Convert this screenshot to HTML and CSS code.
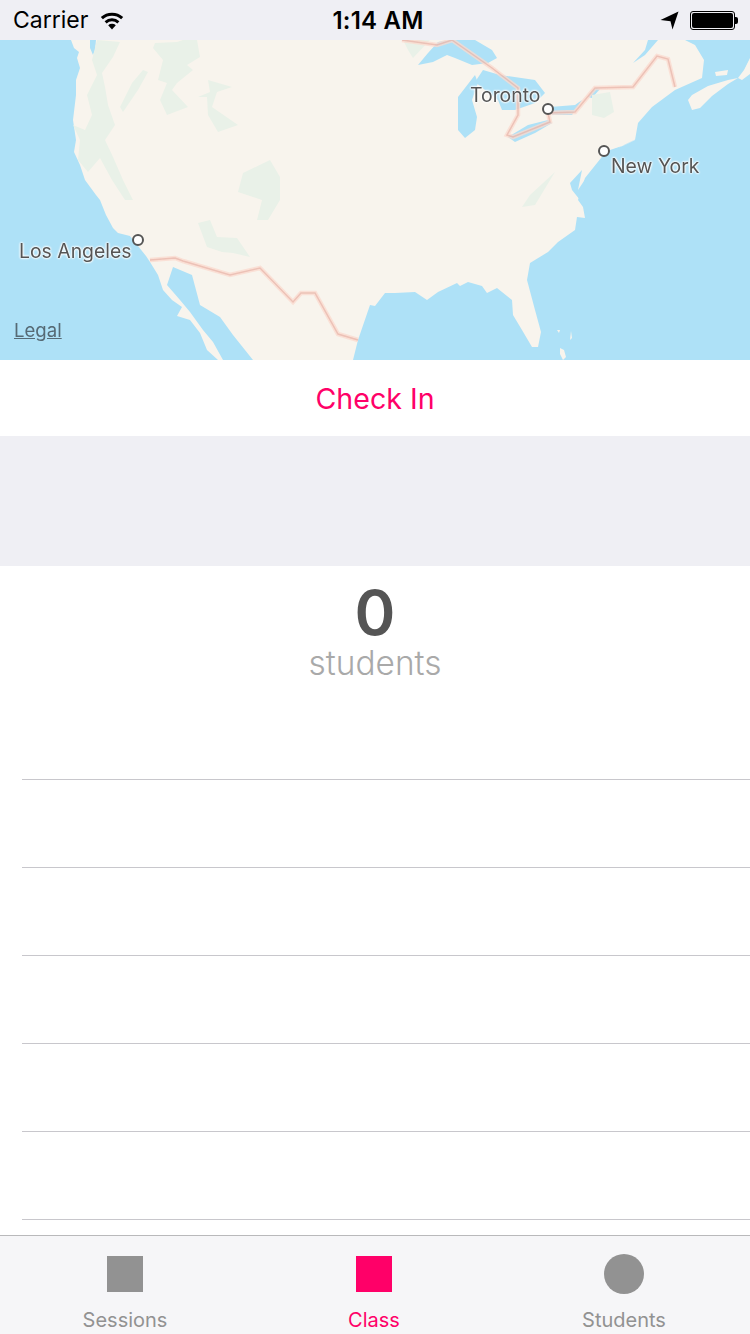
FILE: index.html
```html
<!DOCTYPE html>
<html>
<head>
  <meta charset="UTF-8">
  <title>Class</title>
  <link rel="stylesheet" href="styles.css">
</head>
<body>
<div class="app">

  <div class="status">
    <div class="status-left">
      <span class="carrier">Carrier</span>
      <svg class="wifi" width="26" height="19" viewBox="0 0 26 19">
        <path d="M13 18.5 9.2 14.2a5.6 5.6 0 0 1 7.6 0Z"/>
        <path d="M7.6 12.4 5.6 10.2a11 11 0 0 1 14.8 0l-2 2.2a8.2 8.2 0 0 0-10.8 0Z"/>
        <path d="M3.9 8.3 1.8 6a16.7 16.7 0 0 1 22.4 0l-2.1 2.3a13.6 13.6 0 0 0-18.2 0Z"/>
      </svg>
    </div>
    <span class="clock">1:14 AM</span>
    <div class="status-right">
      <svg class="arrow" width="19" height="19" viewBox="0 0 19 19"><path d="M0.5 9 18.5 0.5 12.5 18.5 10.5 10.2Z"/></svg>
      <div class="battery"><div class="battery-fill"></div></div>
      <div class="battery-tip"></div>
    </div>
  </div>

  <div class="map">
    <svg class="map-art" width="750" height="320" viewBox="0 40 750 320">
      <g class="base">
        <!-- mainland -->
        <path class="land" d="M71 40 74 48 79 52 77 58 80 68 76 80 76 95 73 120 76 140 74 152 80 165 85 180 96 195 100 200 106 215 113 228 118 233 130 236 138 246 146 256 150 262 158 275 163 290 172 300 182 307 177 316 190 320 200 333 207 350 218 360 223 360 213 342 203 330 190 312 180 300 167 285 173 267 192 275 200 305 220 317 233 335 253 360 353 360 358 340 370 305 375 306 385 293 395 293 415 292 427 300 438 292 457 283 460 286 468 282 482 286 487 293 497 288 512 300 513 315 522 330 532 347 538 347 541 332 535 310 527 280 530 263 548 252 558 242 575 230 577 217 585 218 583 207 578 200 585 178 605 153 625 145 635 140 638 123 652 107 675 90 702 78 704 60 695 45 685 40 Z"/>
        <!-- nova scotia, newfoundland -->
        <path class="land" d="M688 100 692 110 700 108 712 96 728 84 738 78 728 80 708 86 692 95Z"/>
        <path class="land" d="M738 78 744 70 750 58 750 74 742 80Z"/>
        <path class="land" d="M715 72 728 70 727 75 716 76Z"/>
        <!-- islands -->
        <path class="land" d="M560 348 564 350 566 357 563 360 560 354Z"/>
        <path class="land" d="M557 330 560 330 559 333Z"/>
        <path class="land" d="M571 331 572 338 570 340Z"/>
        <!-- water inland -->
        <path class="water" d="M633 63 645 50 648 40 658 40 645 55Z"/>
        <path class="water" d="M90 40 96 40 95 50 93 55 90 48Z"/>
        <path class="water" d="M450 40 475 40 492 50 497 58 488 63 472 65 455 58 447 55 433 62 418 65 428 53 438 42Z"/>
        <path class="water" d="M483 70 500 75 535 80 545 93 535 103 515 110 502 110 498 100 485 90 475 82Z"/>
        <path class="water" d="M475 75 458 97 458 130 465 138 475 130 477 117 472 100 478 83Z"/>
        <path class="water" d="M508 137 515 142 535 133 552 123 548 120 528 125Z"/>
        <path class="water" d="M550 107 575 105 582 100 572 115 552 115Z"/>
        <path class="water" d="M588 97 596 88 600 89 592 98Z"/>
        <path class="water" d="M610 150 625 145 640 137 620 147 607 156Z"/>
        <path class="water" d="M570 183 582 170 578 190 586 178 580 200 572 190Z"/>
      </g>
      <g class="forest">
        <path d="M97 40 120 42 113 57 102 73 105 87 108 105 115 125 105 140 113 157 123 180 133 200 125 200 112 180 100 158 88 172 78 160 80 140 73 125 85 130 92 115 87 95 97 75 92 60Z"/>
        <path d="M143 70 148 72 138 90 123 112 120 107 132 83Z"/>
        <path d="M155 43 177 42 183 40 197 40 200 57 187 65 193 70 177 83 172 90 188 107 167 115 160 100 167 83 158 80 163 60 153 48Z"/>
        <path d="M208 80 232 87 217 92 212 107 238 125 218 132 208 115 207 97 198 97 210 92Z"/>
        <path d="M243 173 270 160 280 177 280 200 268 220 257 220 262 200 238 192Z"/>
        <path d="M198 223 210 220 217 237 237 238 250 257 233 253 222 252 207 247Z"/>
        <path d="M592 95 610 92 614 112 604 118 592 115Z"/>
        <path d="M530 195 555 172 535 205 522 207Z"/>
        <path d="M403 40 430 40 413 58 408 50Z"/>
      </g>
      <g class="border">
        <path class="border-wide" d="M150 260 175 258 183 261 230 275 260 268 293 302 301 293 315 293 338 334 358 340"/>
        <path class="border-wide" d="M402 40 437 45 452 40 492 68 518 88 518 115 507 135 513 137 550 122 548 113 575 112 595 88 633 87 657 56 668 59 675 87"/>
        <path class="border-thin" d="M150 260 175 258 183 261 230 275 260 268 293 302 301 293 315 293 338 334 358 340"/>
        <path class="border-thin" d="M402 40 437 45 452 40 492 68 518 88 518 115 507 135 513 137 550 122 548 113 575 112 595 88 633 87 657 56 668 59 675 87"/>
      </g>
      <circle class="city" cx="138" cy="240" r="5"/>
      <circle class="city" cx="548" cy="109" r="5"/>
      <circle class="city" cx="604" cy="151" r="5"/>
    </svg>
    <span class="place place-la">Los Angeles</span>
    <span class="place place-toronto">Toronto</span>
    <span class="place place-ny">New York</span>
    <span class="legal">Legal</span>
  </div>

  <div class="checkin">Check In</div>
  <div class="spacer"></div>

  <div class="count">
    <div class="count-num">0</div>
    <div class="count-label">students</div>
  </div>

  <div class="rows">
    <div class="row"></div>
    <div class="row"></div>
    <div class="row"></div>
    <div class="row"></div>
    <div class="row"></div>
    <div class="row"></div>
  </div>

  <div class="tabbar">
    <div class="tab">
      <div class="tab-icon"><div class="icon-square"></div></div>
      <span class="tab-label">Sessions</span>
    </div>
    <div class="tab tab-active">
      <div class="tab-icon"><div class="icon-square"></div></div>
      <span class="tab-label">Class</span>
    </div>
    <div class="tab">
      <div class="tab-icon"><div class="icon-circle"></div></div>
      <span class="tab-label">Students</span>
    </div>
  </div>

</div>
</body>
</html>
```

FILE: styles.css
```css
html, body { margin: 0; padding: 0; background: white; }
body { font-family: Inter, "Liberation Sans", sans-serif; }
.app { width: 750px; height: 1334px; display: flex; flex-direction: column; overflow: hidden; }

/* status bar */
.status { height: 40px; flex: none; background: #efeff4; display: flex; align-items: center;
  justify-content: space-between; position: relative; padding: 0 12px 0 13px; box-sizing: border-box; color: black; }
.status-left, .status-right { display: flex; align-items: center; }
.carrier { font-size: 23px; letter-spacing: 0; }
.wifi { margin-left: 11px; }
.clock { font-size: 24px; font-weight: 600; letter-spacing: 0.2px; position: absolute; left: 6px; right: 0; text-align: center; }
.arrow { margin-right: 11px; }
.battery { width: 41px; height: 15px; border: 1px solid black; border-radius: 3px; padding: 1px; }
.battery-fill { height: 100%; background: black; border-radius: 2px; }
.battery-tip { width: 3px; height: 7px; background: black; border-radius: 0 2px 2px 0; }

/* map */
.map { height: 320px; flex: none; position: relative; overflow: hidden; background: #aee1f7; }
.map-art { display: block; }
.base { filter: blur(0.4px); }
.land { fill: #f8f4ed; }
.water { fill: #aee1f7; }
.forest { fill: #e9f1e8; filter: blur(0.7px); }
.border { fill: none; stroke-linejoin: miter; filter: blur(0.7px); }
.border-wide { stroke: #fbd9cd; stroke-width: 4.5; opacity: 0.75; }
.border-thin { stroke: #e0a79c; stroke-width: 1.5; opacity: 0.55; }
.city { fill: white; stroke: #555; stroke-width: 2; }
.place { position: absolute; font-size: 19.4px; color: #555; white-space: nowrap; line-height: 22px;
  text-shadow: 0 0 2px white, 0 0 2px white, 0 0 2px white, 0 0 3px white; }
.place-la { left: 19px; top: 200px; }
.place-toronto { left: 470px; top: 44px; }
.place-ny { left: 611px; top: 115px; }
.legal { position: absolute; left: 14px; top: 279px; font-size: 18.6px; line-height: 22px; color: #566a75; text-decoration: underline; }

/* check in */
.checkin { height: 76px; flex: none; background: white; color: #ff0068; font-size: 28.6px;
  display: flex; align-items: center; justify-content: center; }
.spacer { height: 130px; flex: none; background: #efeff4; }

/* count */
.count { height: 126px; flex: none; text-align: center; background: white; }
.count-num { font-size: 62px; font-weight: 600; color: #555; line-height: 70px; padding-top: 12px; }
.count-label { font-size: 33.4px; font-weight: 300; color: #a9a9a9; line-height: 36px; margin-top: -3px; }

/* table rows */
.rows { flex: 1; min-height: 0; background: white; padding-left: 22px; overflow: hidden; }
.row { height: 87px; border-bottom: 1px solid #c8c7cc; }

/* tab bar */
.tabbar { height: 99px; flex: none; box-sizing: border-box; background: #f6f6f8; border-top: 1px solid #b9b9bb;
  display: grid; grid-template-columns: 250px 248px 252px; }
.tab { display: flex; flex-direction: column; align-items: center; color: #929292; }
.tab-icon { height: 76px; margin-bottom: -2px; display: flex; align-items: center; justify-content: center; }
.icon-square { width: 36px; height: 36px; background: #929292; }
.icon-circle { width: 40px; height: 40px; border-radius: 50%; background: #929292; }
.tab-label { font-size: 20px; line-height: 20px; }
.tab-active { color: #ff0068; }
.tab-active .icon-square { background: #ff0068; }
```
